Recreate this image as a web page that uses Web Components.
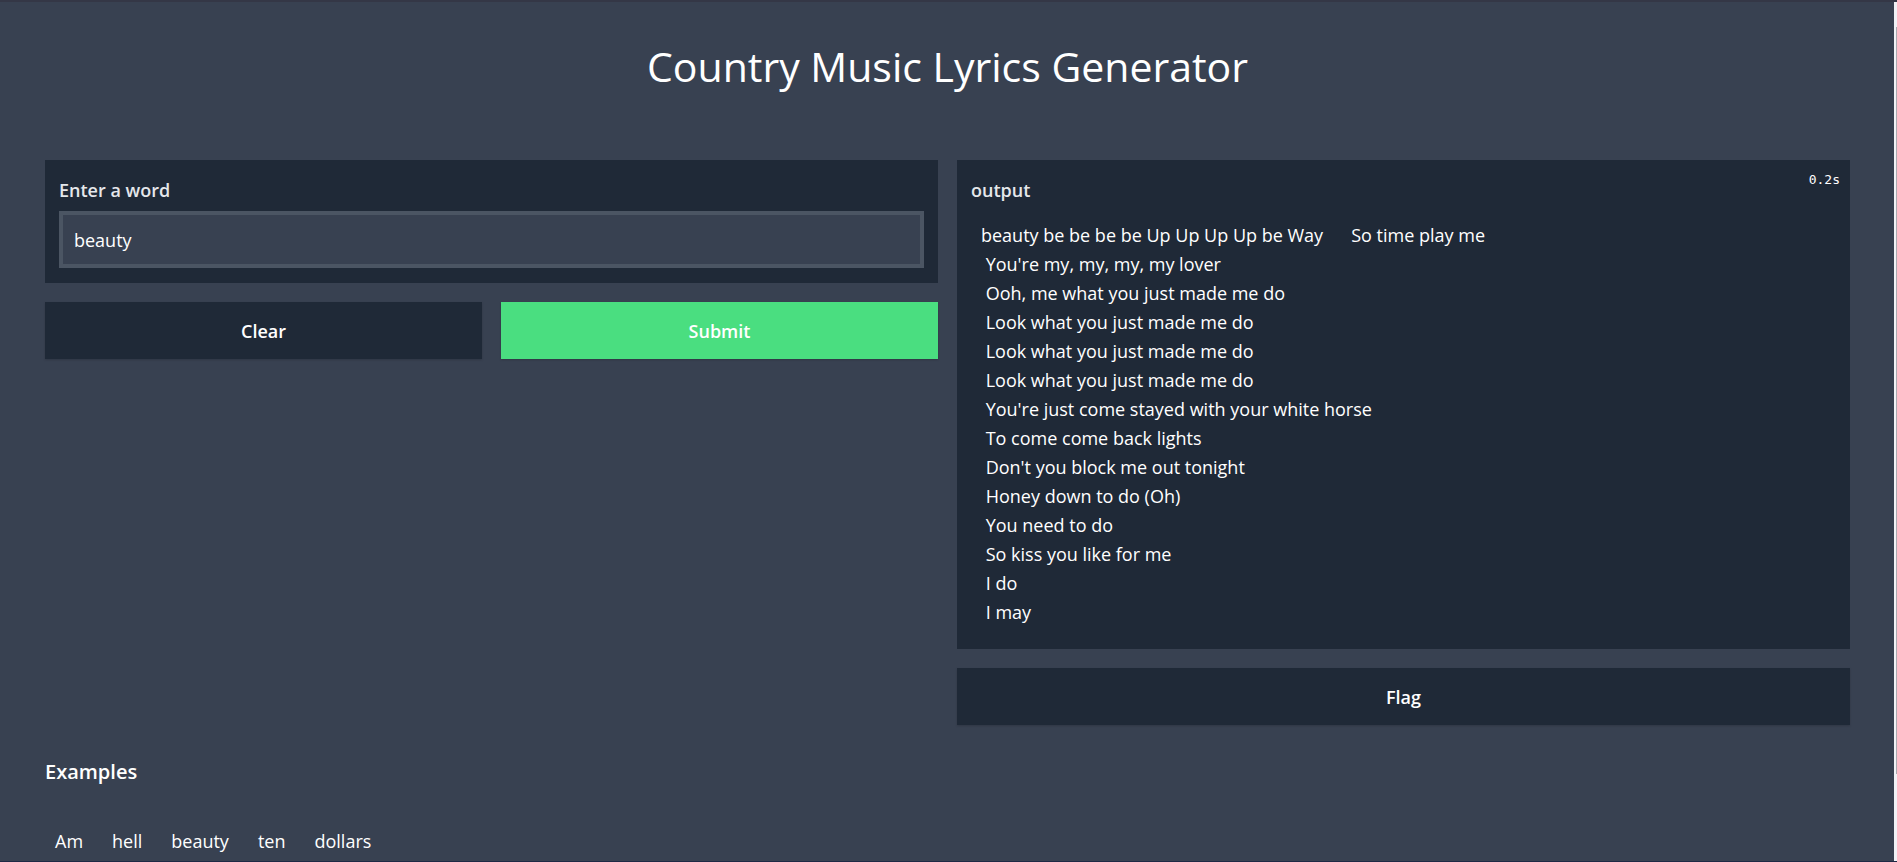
<!DOCTYPE html>
<html lang="en">
<head>
<meta charset="utf-8">
<title>Country Music Lyrics Generator</title>
<style>
  html { height: 100%; }
  body {
    margin: 0; height: 100%; overflow: hidden;
    background: #384151; color: #fff;
    font: 18px/29px "Open Sans", "Noto Sans", sans-serif;
  }
</style>
</head>
<body>
<lyrics-page>
  <span slot="title">Country Music Lyrics Generator</span>
  <text-field slot="input" label="Enter a word" value="beauty"></text-field>
  <action-button slot="input-actions">Clear</action-button>
  <action-button slot="input-actions" primary>Submit</action-button>
  <lyrics-output slot="output" label="output" time="0.2s">beauty be be be be Up Up Up Up be Way      So time play me
 You're my, my, my, my lover
 Ooh, me what you just made me do
 Look what you just made me do
 Look what you just made me do
 Look what you just made me do
 You're just come stayed with your white horse
 To come come back lights
 Don't you block me out tonight
 Honey down to do (Oh)
 You need to do
 So kiss you like for me
 I do
 I may</lyrics-output>
  <action-button slot="output-actions">Flag</action-button>
  <example-list slot="examples" heading="Examples" items="Am,hell,beauty,ten,dollars"></example-list>
</lyrics-page>

<script>
const define = (name, html, setup) => {
  const template = document.createElement('template');
  template.innerHTML = html;
  customElements.define(name, class extends HTMLElement {
    constructor() {
      super();
      this.attachShadow({ mode: 'open' }).append(template.content.cloneNode(true));
    }
    connectedCallback() { if (setup) setup(this, this.shadowRoot); }
  });
};

define('scroll-track', `
  <style>
    :host { display: flex; justify-content: flex-end; width: 3px; background: #f1f2f6; }
    i { width: 1px; height: 87%; margin-top: 25px; background: #a9abb0; }
  </style><i></i>`);

define('action-button', `
  <style>
    :host { display: block; flex: 1; }
    button {
      display: block; width: 100%; padding: 15px 10px 13px; border: 0; cursor: pointer;
      font: inherit; font-weight: 600; color: #fff; background: #1f2937;
      box-shadow: 0 1px 2px rgba(0, 0, 0, .16);
    }
    :host([primary]) button { background: #4ade80; }
  </style>
  <button type="button"><slot></slot></button>`);

define('text-field', `
  <style>
    :host { display: block; padding: 16px 14px 15px; background: #1f2937; }
    label { display: block; margin-bottom: 6px; font-weight: 600; color: #e5e7eb; }
    input {
      display: block; box-sizing: border-box; width: 100%; padding: 11px 11px 9px;
      border: 4px solid #4b5563; border-radius: 0; outline: 0;
      font: inherit; color: #fff; background: #384151;
    }
  </style>
  <label for="word"></label><input id="word" type="text">`,
  (host, root) => {
    root.querySelector('label').textContent = host.getAttribute('label');
    root.querySelector('input').value = host.getAttribute('value');
  });

define('lyrics-output', `
  <style>
    :host { display: block; position: relative; padding: 16px 14px 22px; background: #1f2937; }
    h2 { margin: 0 0 16px; font: inherit; font-weight: 600; color: #e5e7eb; }
    .text { padding: 0 10px; white-space: pre-wrap; }
    time { position: absolute; top: 10px; right: 10px; font: 13px/20px "DejaVu Sans Mono", monospace; }
  </style>
  <h2></h2><div class="text"><slot></slot></div><time></time>`,
  (host, root) => {
    root.querySelector('h2').textContent = host.getAttribute('label');
    root.querySelector('time').textContent = host.getAttribute('time');
  });

define('example-list', `
  <style>
    :host { display: block; }
    h2 { margin: 0 0 41px; font: 600 20px/29px "Open Sans", "Noto Sans", sans-serif; }
    div { display: flex; gap: 9px; }
    button { padding: 0 10px; border: 0; background: none; color: inherit; font: inherit; cursor: pointer; }
  </style>
  <h2></h2><div></div>`,
  (host, root) => {
    root.querySelector('h2').textContent = host.getAttribute('heading');
    root.querySelector('div').replaceChildren(...host.getAttribute('items').split(',').map(text => {
      const button = document.createElement('button');
      button.type = 'button';
      button.textContent = text;
      return button;
    }));
  });

define('lyrics-page', `
  <style>
    :host {
      display: flex; box-sizing: border-box; height: 100%; overflow: hidden;
      border-top: 2px solid #343746; border-bottom: 1px solid #1e2945;
    }
    main { flex: 1; min-width: 0; padding: 35px 44px 0 45px; }
    h1 { margin: 0 0 65px; text-align: center; font-size: 41px; line-height: 58px; font-weight: 400; }
    .columns { display: grid; grid-template-columns: 1fr 1fr; align-items: start; gap: 19px; }
    .column { display: flex; flex-direction: column; gap: 19px; }
    .actions { display: flex; gap: 19px; }
    .examples { margin-top: 32px; }
  </style>
  <main>
    <h1><slot name="title"></slot></h1>
    <div class="columns">
      <section class="column"><slot name="input"></slot><div class="actions"><slot name="input-actions"></slot></div></section>
      <section class="column"><slot name="output"></slot><div class="actions"><slot name="output-actions"></slot></div></section>
    </div>
    <section class="examples"><slot name="examples"></slot></section>
  </main>
  <scroll-track></scroll-track>`);
</script>
</body>
</html>
